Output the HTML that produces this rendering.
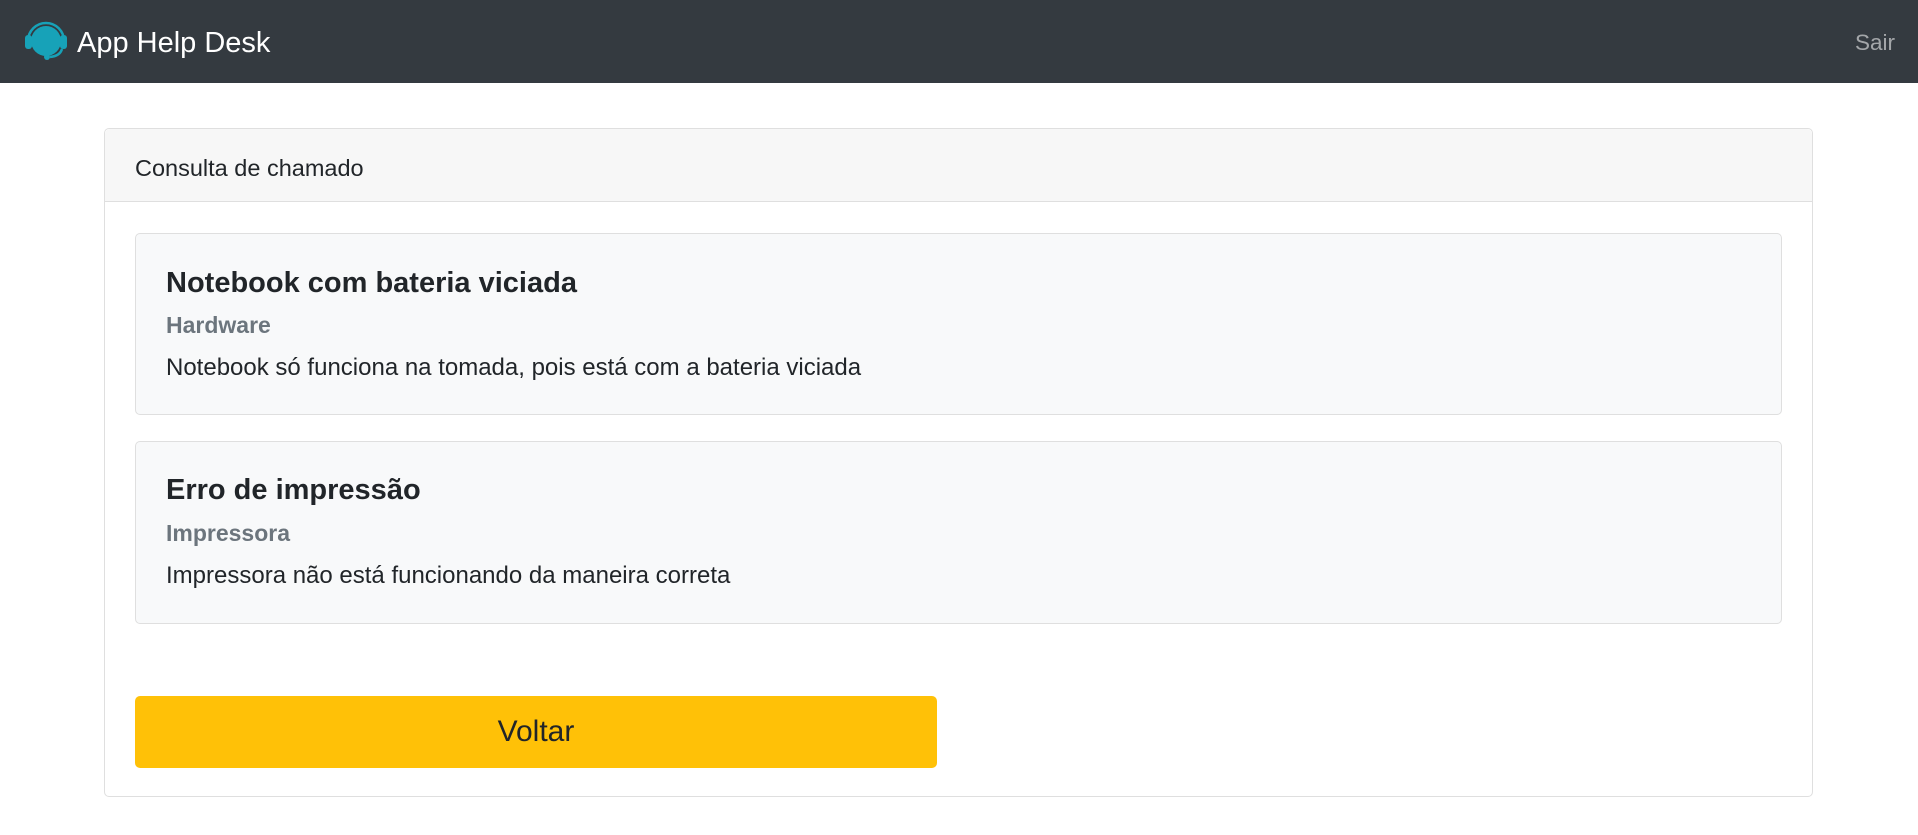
<!DOCTYPE html>
<html><head><meta charset="utf-8"><style>
*{margin:0;padding:0;box-sizing:border-box}
body{width:1918px;height:835px;background:#fff;font-family:"Liberation Sans",sans-serif;color:#212529;position:relative;overflow:hidden}
.t{position:absolute;white-space:nowrap}
.nav{position:absolute;left:0;top:0;width:1918px;height:83px;background:#343a40}
.card{position:absolute;left:104px;top:128px;width:1709px;height:669px;border:1px solid #dfdfdf;border-radius:5px;background:#fff}
.hdr{position:absolute;left:0;top:0;right:0;height:73px;background:#f7f7f7;border-bottom:1px solid #dfdfdf;border-radius:5px 5px 0 0}
.ic{position:absolute;left:135px;width:1647px;background:#f8f9fa;border:1px solid #dfdfdf;border-radius:5px}
.btn{position:absolute;left:135px;top:696px;width:802px;height:72px;background:#ffc107;border-radius:5px;font-size:30px;text-align:center;line-height:72px;color:#212529}
</style></head><body>
<div class="nav">
<svg style="position:absolute;left:24px;top:19px" width="44" height="45" viewBox="0 0 44 45">
<path d="M4 22 A18 18 0 0 1 40 22" fill="none" stroke="#17a2b8" stroke-width="2.5"/>
<ellipse cx="22" cy="22" rx="15" ry="15" fill="#17a2b8"/>
<rect x="1" y="16" width="7" height="14" rx="3" fill="#17a2b8"/>
<rect x="36" y="16" width="7" height="14" rx="3" fill="#17a2b8"/>
<path d="M38 30 Q36 37 26 38" fill="none" stroke="#17a2b8" stroke-width="2.5"/>
<circle cx="23" cy="38" r="3" fill="#17a2b8"/>
</svg>
<div class="t" style="left:77px;top:25px;font-size:29px;line-height:36px;color:#fff">App Help Desk</div>
<div class="t" style="left:1855px;top:28px;font-size:22.5px;line-height:30px;color:rgba(255,255,255,.55)">Sair</div>
</div>
<div class="card"><div class="hdr"></div></div>
<div class="t" style="left:135px;top:153px;font-size:23.5px;line-height:30px">Consulta de chamado</div>
<div class="ic" style="top:233px;height:182px"></div>
<div class="t" style="left:166px;top:265px;font-size:29px;line-height:36px;font-weight:bold">Notebook com bateria viciada</div>
<div class="t" style="left:166px;top:310px;font-size:23px;line-height:30px;font-weight:bold;color:#6c757d">Hardware</div>
<div class="t" style="left:166px;top:353px;font-size:24px;line-height:30px">Notebook só funciona na tomada, pois está com a bateria viciada</div>
<div class="ic" style="top:441px;height:183px"></div>
<div class="t" style="left:166px;top:472px;font-size:29px;line-height:36px;font-weight:bold">Erro de impressão</div>
<div class="t" style="left:166px;top:518px;font-size:23px;line-height:30px;font-weight:bold;color:#6c757d">Impressora</div>
<div class="t" style="left:166px;top:561px;font-size:24px;line-height:30px">Impressora não está funcionando da maneira correta</div>
<div class="btn">Voltar</div>
</body></html>
